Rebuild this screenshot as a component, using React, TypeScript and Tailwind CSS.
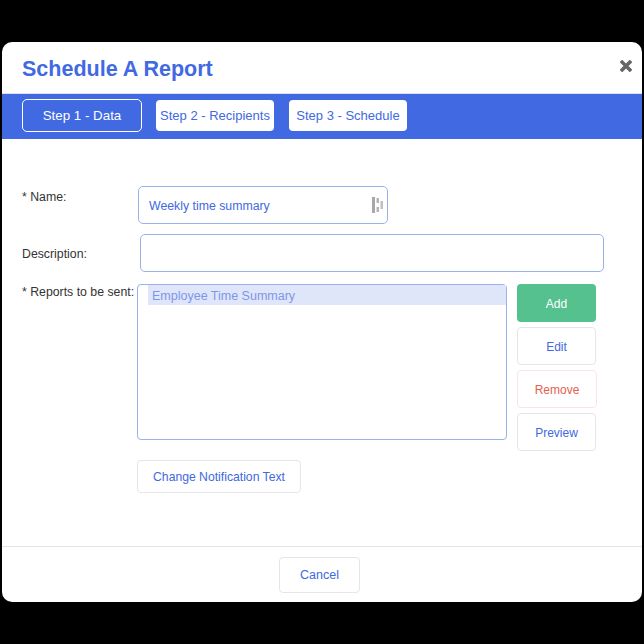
export default function App() {
  return (
    <div className="w-[644px] h-[644px] bg-black pt-[42px] pl-[2px] font-['Liberation_Sans',Arial,sans-serif]">
      <div className="w-[640px] h-[560px] bg-white rounded-[10px] flex flex-col overflow-hidden">
        <div className="h-[52px] shrink-0 flex items-start justify-between border-b border-[#dee2e6] pl-[20px] pr-[10px]">
          <h1 className="mt-[14px] text-[21.5px] leading-[26px] font-bold text-[#4169e1]">Schedule A Report</h1>
          <svg className="mt-[18px]" width="12" height="12" viewBox="0 0 12 12" aria-hidden="true">
            <path d="M2.2 2.2 L9.8 9.8 M9.8 2.2 L2.2 9.8" stroke="#666" strokeWidth="3.6" strokeLinecap="square" fill="none" />
          </svg>
        </div>
        <div className="h-[45px] shrink-0 bg-[#4169e1] flex items-center pl-[20px] pb-[2px]">
          <div className="w-[120px] h-[33px] rounded-[5px] border border-white text-white text-[13.33px] flex items-center justify-center whitespace-nowrap">Step 1 - Data</div>
          <div className="ml-[14px] w-[118px] h-[31px] rounded-[4px] bg-white text-[#4169e1] text-[13px] flex items-center justify-center whitespace-nowrap">Step 2 - Recipients</div>
          <div className="ml-[15px] w-[118px] h-[31px] rounded-[4px] bg-white text-[#4169e1] text-[13px] flex items-center justify-center whitespace-nowrap">Step 3 - Schedule</div>
        </div>
        <div className="flex-1 pl-[20px] pt-[47px] text-[12.3px] text-[#333]">
          <div className="flex h-[38px]">
            <label className="w-[116px] pt-[4px] leading-[14px]">* Name:</label>
            <div className="w-[250px] h-[38px] border border-[#9bb1ea] rounded-[5px] flex items-center justify-between pl-[10px] pr-[4px] text-[#4169e1]">
              <span className="pt-[2px]">Weekly time summary</span>
              <svg width="11" height="16" viewBox="0 0 11 16" aria-hidden="true">
                <rect x="0" y="0" width="3" height="16" fill="#a8a8a8" />
                <rect x="4.5" y="1" width="2.5" height="5" fill="#b5b5b5" />
                <rect x="4.5" y="10" width="2.5" height="5" fill="#b5b5b5" />
                <rect x="8.5" y="4" width="2.5" height="8" fill="#c0c0c0" />
              </svg>
            </div>
          </div>
          <div className="flex h-[38px] mt-[10px]">
            <label className="w-[118px] pt-[13px] leading-[14px]">Description:</label>
            <div className="w-[464px] h-[38px] border border-[#9bb1ea] rounded-[5px]" />
          </div>
          <div className="flex mt-[12px]">
            <label className="w-[115px] pt-[1px] leading-[14px] whitespace-nowrap">* Reports to be sent:</label>
            <div className="w-[370px] h-[156px] border border-[#9bb1ea] rounded-[4px] pl-[10px] pr-0 pt-0">
              <div className="h-[20px] bg-[#e0e6f9] text-[#7d96e9] text-[12.5px] pl-[4px] pt-[3px] flex items-center">Employee Time Summary</div>
            </div>
            <div className="ml-[10px] flex flex-col gap-[5px]">
              <button className="w-[79px] h-[38px] pt-[1px] rounded-[4px] bg-[#55c18e] text-white text-[12px]">Add</button>
              <button className="w-[79px] h-[38px] pt-[1px] rounded-[4px] border border-[#e6e6e6] text-[#4169e1] text-[12px]">Edit</button>
              <button className="w-[80px] h-[38px] pt-[1px] rounded-[4px] border border-[#fde3e3] text-[#e5604e] text-[12px]">Remove</button>
              <button className="w-[79px] h-[38px] pt-[1px] rounded-[4px] border border-[#e6e6e6] text-[#4169e1] text-[12px]">Preview</button>
            </div>
          </div>
          <div className="pl-[115px] mt-[9px]">
            <button className="w-[164px] h-[33px] pt-[2px] rounded-[4px] border border-[#e6e6e6] text-[#4169e1] text-[12.2px]">Change Notification Text</button>
          </div>
        </div>
        <div className="h-[56px] shrink-0 border-t border-[#e3e3e3] flex justify-center pt-[10px] pr-[5px]">
          <button className="w-[81px] h-[36px] pt-[1px] rounded-[4px] border border-[#e6e6e6] text-[#4169e1] text-[12.5px]">Cancel</button>
        </div>
      </div>
    </div>
  );
}
